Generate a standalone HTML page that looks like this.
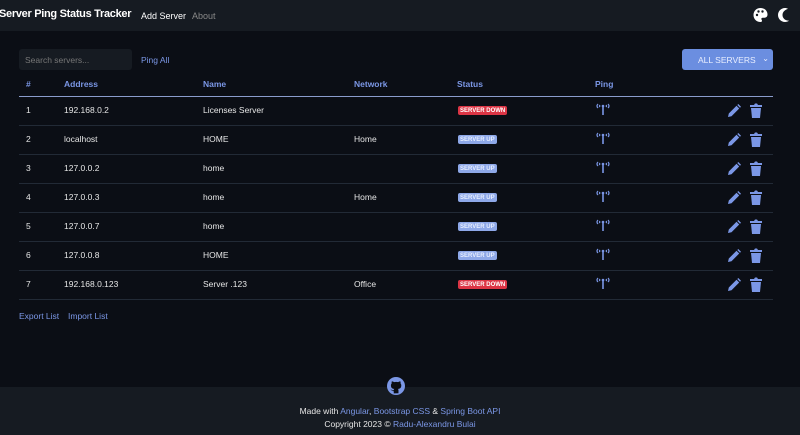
<!DOCTYPE html>
<html><head><style>
*{box-sizing:border-box;margin:0;padding:0}
body{width:800px;height:435px;background:#0b0e15;font-family:"Liberation Sans",sans-serif;color:#e6e6e6;position:relative;overflow:hidden;font-size:9px}
.nav{position:absolute;left:0;top:0;width:800px;height:31px;background:#161b22}
.brand{position:absolute;left:-1px;top:8px;font-size:11px;font-weight:bold;color:#fff;letter-spacing:-0.3px}
.nl{position:absolute;top:11px;font-size:9px}
.search{position:absolute;left:19px;top:49px;width:113px;height:21px;background:#161b22;border-radius:3px;color:#777;font-size:8.5px;padding:6px 6px}
.blue{color:#7b97e6}
.btn{position:absolute;left:682px;top:49px;width:91px;height:21px;background:#6b8ee0;border-radius:3px;color:#e8eeff;font-size:8.5px;padding-top:6px;padding-left:16px}
.th{position:absolute;top:79px;font-weight:bold;color:#7b97e6;font-size:8.5px}
.hl{position:absolute;left:19px;top:96px;width:754px;height:1px;background:#8a9ccc}
.row{position:absolute;left:19px;width:754px;height:29px;border-bottom:1px solid #222a36}
.row span{position:absolute;top:8px;font-size:8.5px}
.badge{position:absolute;top:9px;font-size:6px;font-weight:bold;padding:1.5px 2px;border-radius:2px;color:#fff}
.down{background:#dc3545}.up{background:#8ea8e8;color:#e8efff}
.foot{position:absolute;left:0;top:387px;width:800px;height:48px;background:#161b22}
</style></head><body>
<div class="nav">
<div class="brand">Server Ping Status Tracker</div>
<div class="nl" style="left:141px;color:#fff">Add Server</div>
<div class="nl" style="left:192px;color:#888">About</div>
<svg style="position:absolute;left:752px;top:7px" width="17" height="16" viewBox="0 0 16 16"><path fill="#fff" d="M8 1C4 1 1 4 1 8s3 7 7 7c1 0 1.5-.6 1.5-1.3 0-.8-.7-1-.7-1.8 0-.7.6-1.2 1.4-1.2H12c2 0 3-1.4 3-3.3C15 3.8 12 1 8 1z"/><circle cx="4.5" cy="8" r="1.2" fill="#161b22"/><circle cx="6" cy="4.5" r="1.2" fill="#161b22"/><circle cx="10" cy="4.5" r="1.2" fill="#161b22"/></svg>
<svg style="position:absolute;left:776px;top:7px" width="14" height="16" viewBox="0 0 14 16"><path fill="#fff" d="M9 1C5 1 2 4.3 2 8s3 7 7 7c1.6 0 3-.5 4-1.4-4 .2-6.5-2.6-6.5-5.6S9 2.6 12 1.9C11.2 1.3 10 1 9 1z"/></svg>
</div>
<div class="search">Search servers...</div>
<div style="position:absolute;left:141px;top:55px;font-size:8.5px" class="blue">Ping All</div>
<div class="btn">ALL SERVERS<span style="position:absolute;right:4px;top:5px;font-size:8px">⌄</span></div>
<div class="th" style="left:26px">#</div><div class="th" style="left:64px">Address</div><div class="th" style="left:203px">Name</div><div class="th" style="left:354px">Network</div><div class="th" style="left:457px">Status</div><div class="th" style="left:595px">Ping</div>
<div class="hl"></div>
<div id="rows"></div>
<script>
var d=[["1","192.168.0.2","Licenses Server","",0],["2","localhost","HOME","Home",1],["3","127.0.0.2","home","",1],["4","127.0.0.3","home","Home",1],["5","127.0.0.7","home","",1],["6","127.0.0.8","HOME","",1],["7","192.168.0.123","Server .123","Office",0]];
var h="";d.forEach(function(r,i){var t=97+i*29;
h+='<div class="row" style="top:'+t+'px"><span style="left:7px">'+r[0]+'</span><span style="left:45px">'+r[1]+'</span><span style="left:184px">'+r[2]+'</span><span style="left:335px">'+r[3]+'</span>'+
(r[4]?'<div class="badge up" style="left:439px">SERVER UP</div>':'<div class="badge down" style="left:439px">SERVER DOWN</div>')+
'<svg style="position:absolute;left:576px;top:5px" width="16" height="14" viewBox="0 0 16 14"><g fill="none" stroke="#7b97e6" stroke-width="1.2"><path d="M3 2Q1 4 3 6M5 3Q4 4 5 5M13 2Q15 4 13 6M11 3Q12 4 11 5"/><path d="M8 4V13" stroke-width="1.6"/></g><circle cx="8" cy="4" r="1.3" fill="#7b97e6"/></svg>'+
'<svg style="position:absolute;left:708px;top:7px" width="14" height="14" viewBox="0 0 14 14"><path fill="#7b97e6" d="M1 13l.8-3.5L9.5 1.8l2.7 2.7L4.5 12.2z M10.3 1l1-1 2.7 2.7-1 1z"/></svg>'+
'<svg style="position:absolute;left:731px;top:6px" width="12" height="15" viewBox="0 0 12 15"><path fill="#7b97e6" d="M0 2h4l1-1.5h2L8 2h4v2H0z M1 5h10l-1 10H2z"/></svg></div>';});
document.getElementById("rows").innerHTML=h;
</script>
<div style="position:absolute;left:19px;top:311px;font-size:8.5px" class="blue">Export List</div>
<div style="position:absolute;left:68px;top:311px;font-size:8.5px" class="blue">Import List</div>
<div class="foot">
<svg style="position:absolute;left:387px;top:-10px" width="18" height="18" viewBox="0 0 16 16"><circle cx="8" cy="8" r="8" fill="#7b97e6"/><path fill="#0b0e15" d="M6 14.5v-2c-1.5.3-2-.6-2.3-1.2-.2-.4-.6-.7-.9-.8.6 0 1 .5 1.2.8.5.8 1.3.6 2 .4 0-.5.3-.9.5-1.1-2-.3-3-1-3-3.2 0-.7.3-1.3.7-1.7-.1-.3-.2-1 .1-1.8 0 0 .7-.2 2 .7a7 7 0 0 1 3.6 0c1.3-.9 2-.7 2-.7.3.8.2 1.5.1 1.8.4.4.7 1 .7 1.7 0 2.2-1 2.9-3 3.2.3.3.5.8.5 1.4v2.5z"/></svg>
<div style="position:absolute;top:19px;width:800px;text-align:center;font-size:8.5px">Made with <span class="blue">Angular</span>, <span class="blue">Bootstrap CSS</span> &amp; <span class="blue">Spring Boot API</span></div>
<div style="position:absolute;top:32px;width:800px;text-align:center;font-size:8.5px">Copyright 2023 © <span class="blue">Radu-Alexandru Bulai</span></div>
</div>
</body></html>
